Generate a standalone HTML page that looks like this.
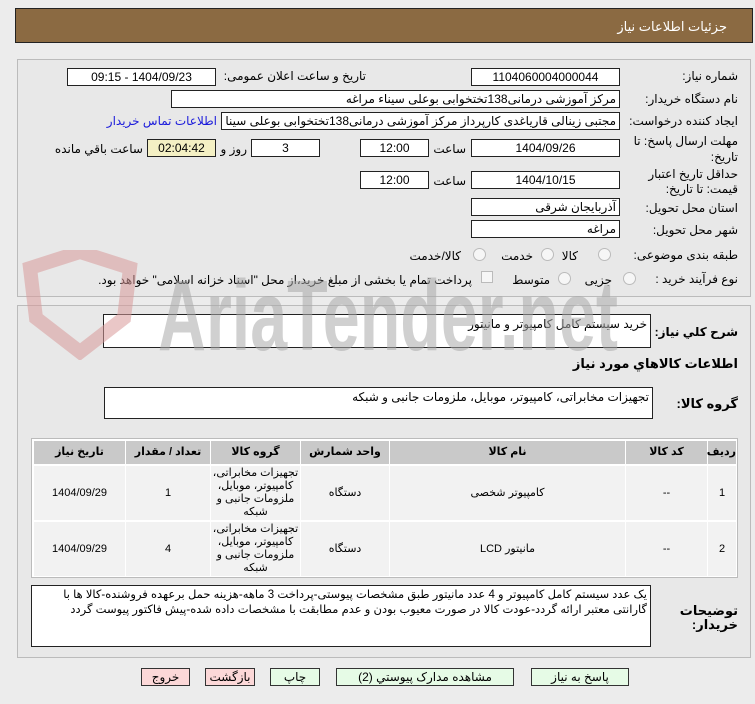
<!DOCTYPE html>
<html><head><meta charset="utf-8">
<style>
body{margin:0;width:755px;height:704px;background:#ececec;font-family:"Liberation Sans","DejaVu Sans",sans-serif;font-size:12px;color:#000;position:relative;overflow:hidden;direction:rtl}
div{position:absolute;box-sizing:border-box;z-index:2}
.pn{z-index:0}
.b{background:#fff;border:1px solid #222;text-align:center;line-height:16px;white-space:nowrap;overflow:hidden}
.l{white-space:nowrap;line-height:16px}
.r{text-align:right;padding-right:3px}
.rad{width:13px;height:13px;border:1px solid #bbb;border-radius:50%;background:#f6f6f6}
.th{background:#c9c9c9;font-weight:bold;text-align:center;line-height:22px;font-size:11px}
.td{background:#f2f2f2;text-align:center;display:flex;align-items:center;justify-content:center;line-height:13px;font-size:11px}
.btn{border:1px solid #333;text-align:center;line-height:16px;font-size:12px}
</style></head><body>
<div class="pn" style="left:15px;top:8px;width:738px;height:35px;background:#8b6a42;border:1px solid #222"></div>
<div class="l" style="right:28px;top:19px;color:#fff;font-size:13px">جزئیات اطلاعات نیاز</div>

<div class="pn" style="left:17px;top:59px;width:734px;height:238px;border:1px solid #bbb;background:#e8e8e8"></div>
<div class="pn" style="left:17px;top:305px;width:734px;height:353px;border:1px solid #bbb;background:#e8e8e8"></div>

<div class="l" style="right:17px;top:68px">شماره نیاز:</div>
<div class="b" style="left:471px;top:68px;width:149px;height:18px">1104060004000044</div>
<div class="l" style="right:389px;top:68px">تاریخ و ساعت اعلان عمومی:</div>
<div class="b" style="left:67px;top:68px;width:149px;height:18px">1404/09/23 - 09:15</div>

<div class="l" style="right:17px;top:91px">نام دستگاه خریدار:</div>
<div class="b r" style="left:171px;top:90px;width:449px;height:18px">مرکز آموزشی درمانی138تختخوابی بوعلی سیناء مراغه</div>

<div class="l" style="right:17px;top:113px">ایجاد کننده درخواست:</div>
<div class="b r" style="left:221px;top:112px;width:399px;height:18px">مجتبی زینالی قاریاغدی کارپرداز مرکز آموزشی درمانی138تختخوابی بوعلی سینا</div>
<div class="l" style="right:538px;top:113px;color:#1a1adb">اطلاعات تماس خریدار</div>

<div class="l" style="right:17px;top:133px">مهلت ارسال پاسخ: تا</div>
<div class="l" style="right:17px;top:149px">تاریخ:</div>
<div class="b" style="left:471px;top:139px;width:149px;height:18px">1404/09/26</div>
<div class="l" style="right:289px;top:141px">ساعت</div>
<div class="b" style="left:360px;top:139px;width:69px;height:18px">12:00</div>
<div class="b" style="left:251px;top:139px;width:69px;height:18px">3</div>
<div class="l" style="right:508px;top:141px">روز و</div>
<div class="b" style="left:147px;top:139px;width:69px;height:18px;background:#f4f0c4">02:04:42</div>
<div class="l" style="right:612px;top:141px">ساعت باقي مانده</div>

<div class="l" style="right:17px;top:166px">حداقل تاریخ اعتبار</div>
<div class="l" style="right:17px;top:181px">قیمت: تا تاریخ:</div>
<div class="b" style="left:471px;top:171px;width:149px;height:18px">1404/10/15</div>
<div class="l" style="right:289px;top:173px">ساعت</div>
<div class="b" style="left:360px;top:171px;width:69px;height:18px">12:00</div>

<div class="l" style="right:17px;top:200px">استان محل تحویل:</div>
<div class="b r" style="left:471px;top:198px;width:149px;height:18px">آذربایجان شرقی</div>
<div class="l" style="right:17px;top:222px">شهر محل تحویل:</div>
<div class="b r" style="left:471px;top:220px;width:149px;height:18px">مراغه</div>

<div class="l" style="right:17px;top:247px">طبقه بندی موضوعی:</div>
<div class="rad" style="left:598px;top:248px"></div><div class="l" style="right:177px;top:248px">کالا</div>
<div class="rad" style="left:541px;top:248px"></div><div class="l" style="right:222px;top:248px">خدمت</div>
<div class="rad" style="left:473px;top:248px"></div><div class="l" style="right:294px;top:248px">کالا/خدمت</div>

<div class="l" style="right:17px;top:271px">نوع فرآیند خرید :</div>
<div class="rad" style="left:623px;top:272px"></div><div class="l" style="right:143px;top:272px">جزیی</div>
<div class="rad" style="left:558px;top:272px"></div><div class="l" style="right:205px;top:272px">متوسط</div>
<div style="left:481px;top:271px;width:12px;height:12px;border:1px solid #bbb;background:#f6f6f6"></div>
<div class="l" style="right:283px;top:272px">پرداخت تمام یا بخشی از مبلغ خرید،از محل "اسناد خزانه اسلامی" خواهد بود.</div>

<div class="l" style="right:17px;top:324px;font-weight:bold;font-size:12px">شرح کلي نیاز:</div>
<div class="b r" style="left:103px;top:314px;width:548px;height:34px;text-align:right;line-height:18px">خرید سیستم کامل کامپیوتر و مانیتور</div>
<div class="l" style="right:17px;top:356px;font-weight:bold;font-size:13px">اطلاعات کالاهاي مورد نیاز</div>
<div class="l" style="right:17px;top:396px;font-weight:bold;font-size:13px">گروه کالا:</div>
<div class="b r" style="left:104px;top:387px;width:549px;height:32px;text-align:right;line-height:18px">تجهیزات مخابراتی، کامپیوتر، موبایل، ملزومات جانبی و شبکه</div>

<!-- watermark (on top, translucent) -->
<svg style="position:absolute;left:18px;top:250px;direction:ltr;z-index:5;opacity:0.55" width="640" height="110">
<path d="M12 18 L62 2 L112 18 L106 68 L62 102 L18 68 Z" fill="none" stroke="#d99a9a" stroke-width="14"/>
<text x="140" y="100" text-anchor="start" font-family="Liberation Sans" font-weight="bold" font-size="100" fill="#aaaaaa" textLength="460" lengthAdjust="spacingAndGlyphs">AriaTender.net</text>
</svg>

<div style="left:31px;top:438px;width:707px;height:140px;border:1px solid #bbb;background:#fff"></div>
<div class="th" style="left:708px;top:441px;width:28px;height:23px">ردیف</div>
<div class="th" style="left:626px;top:441px;width:81px;height:23px">کد کالا</div>
<div class="th" style="left:390px;top:441px;width:235px;height:23px">نام کالا</div>
<div class="th" style="left:301px;top:441px;width:88px;height:23px">واحد شمارش</div>
<div class="th" style="left:211px;top:441px;width:89px;height:23px">گروه کالا</div>
<div class="th" style="left:126px;top:441px;width:84px;height:23px">تعداد / مقدار</div>
<div class="th" style="left:34px;top:441px;width:91px;height:23px">تاریخ نیاز</div>

<div class="td" style="left:708px;top:466px;width:28px;height:54px">1</div>
<div class="td" style="left:626px;top:466px;width:81px;height:54px">--</div>
<div class="td" style="left:390px;top:466px;width:235px;height:54px">کامپیوتر شخصی</div>
<div class="td" style="left:301px;top:466px;width:88px;height:54px">دستگاه</div>
<div class="td" style="left:211px;top:466px;width:89px;height:54px">تجهیزات مخابراتی، کامپیوتر، موبایل، ملزومات جانبی و شبکه</div>
<div class="td" style="left:126px;top:466px;width:84px;height:54px">1</div>
<div class="td" style="left:34px;top:466px;width:91px;height:54px">1404/09/29</div>

<div class="td" style="left:708px;top:522px;width:28px;height:54px">2</div>
<div class="td" style="left:626px;top:522px;width:81px;height:54px">--</div>
<div class="td" style="left:390px;top:522px;width:235px;height:54px">مانیتور LCD</div>
<div class="td" style="left:301px;top:522px;width:88px;height:54px">دستگاه</div>
<div class="td" style="left:211px;top:522px;width:89px;height:54px">تجهیزات مخابراتی، کامپیوتر، موبایل، ملزومات جانبی و شبکه</div>
<div class="td" style="left:126px;top:522px;width:84px;height:54px">4</div>
<div class="td" style="left:34px;top:522px;width:91px;height:54px">1404/09/29</div>

<div class="l" style="right:17px;top:603px;font-weight:bold;font-size:13px">توضیحات</div>
<div class="l" style="right:17px;top:617px;font-weight:bold;font-size:13px">خریدار:</div>
<div class="b" style="left:31px;top:585px;width:620px;height:62px;text-align:right;white-space:normal;padding:2px 3px;line-height:15px;font-size:11.5px">یک عدد سیستم کامل کامپیوتر و 4 عدد مانیتور طبق مشخصات پیوستی-پرداخت 3 ماهه-هزینه حمل برعهده فروشنده-کالا ها با گارانتی معتبر ارائه گردد-عودت کالا در صورت معیوب بودن و عدم مطابقت با مشخصات داده شده-پیش فاکتور پیوست گردد</div>

<div class="btn" style="left:531px;top:668px;width:98px;height:18px;background:#e6fbe6">پاسخ به نیاز</div>
<div class="btn" style="left:336px;top:668px;width:178px;height:18px;background:#e6fbe6">مشاهده مدارک پیوستي (2)</div>
<div class="btn" style="left:270px;top:668px;width:50px;height:18px;background:#e6fbe6">چاپ</div>
<div class="btn" style="left:205px;top:668px;width:50px;height:18px;background:#fcd8d8">بازگشت</div>
<div class="btn" style="left:141px;top:668px;width:49px;height:18px;background:#fcd8d8">خروج</div>
</body></html>
